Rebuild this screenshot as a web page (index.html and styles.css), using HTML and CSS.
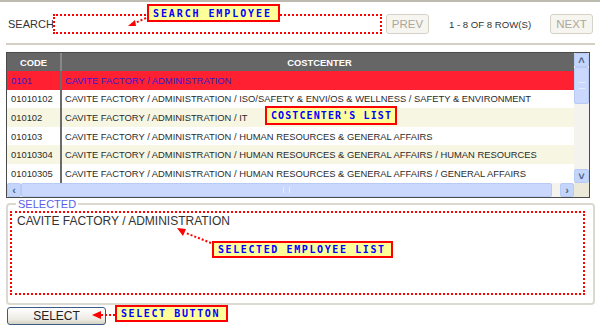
FILE: index.html
```html
<!DOCTYPE html>
<html>
<head>
	<title>Costcenter Picker</title>
	<link rel="stylesheet" href="styles.css">
</head>
<body>
	<div class="page">
		<div class="toolbar">
			<label class="search-label" for="search">SEARCH</label>
			<input id="search" class="search" type="text">
			<button class="pager-btn" disabled>PREV</button>
			<span class="pager-info">1 - 8 OF 8 ROW(S)</span>
			<button class="pager-btn" disabled>NEXT</button>
		</div>
		<div class="sep"></div>

		<div class="grid">
			<div class="grid-body">
				<div class="row head">
					<div class="c-code">CODE</div>
					<div class="c-name">COSTCENTER</div>
				</div>
				<div class="row picked">
					<div class="c-code">0101</div>
					<div class="c-name">CAVITE FACTORY / ADMINISTRATION</div>
				</div>
				<div class="row">
					<div class="c-code">01010102</div>
					<div class="c-name">CAVITE FACTORY / ADMINISTRATION / ISO/SAFETY &amp; ENVI/OS &amp; WELLNESS / SAFETY &amp; ENVIRONMENT</div>
				</div>
				<div class="row alt">
					<div class="c-code">010102</div>
					<div class="c-name">CAVITE FACTORY / ADMINISTRATION / IT</div>
				</div>
				<div class="row">
					<div class="c-code">010103</div>
					<div class="c-name">CAVITE FACTORY / ADMINISTRATION / HUMAN RESOURCES &amp; GENERAL AFFAIRS</div>
				</div>
				<div class="row alt">
					<div class="c-code">01010304</div>
					<div class="c-name">CAVITE FACTORY / ADMINISTRATION / HUMAN RESOURCES &amp; GENERAL AFFAIRS / HUMAN RESOURCES</div>
				</div>
				<div class="row">
					<div class="c-code">01010305</div>
					<div class="c-name">CAVITE FACTORY / ADMINISTRATION / HUMAN RESOURCES &amp; GENERAL AFFAIRS / GENERAL AFFAIRS</div>
				</div>
			</div>
			<div class="vscroll">
				<div class="sb-btn">&#x2C4;</div>
				<div class="sb-thumb v"><span class="grip"></span></div>
				<div class="sb-track"></div>
				<div class="sb-btn">&#x2C5;</div>
			</div>
			<div class="hscroll">
				<div class="sb-btn">&lsaquo;</div>
				<div class="sb-thumb h"><span class="grip"></span></div>
				<div class="sb-track"></div>
				<div class="sb-btn">&rsaquo;</div>
			</div>
			<div class="corner"></div>
		</div>

		<fieldset class="selected">
			<legend>SELECTED</legend>
			<div class="selbox">CAVITE FACTORY / ADMINISTRATION</div>
		</fieldset>

		<button class="select-btn">SELECT</button>

		<!-- callouts -->
		<div class="note n-search">SEARCH EMPLOYEE</div>
		<div class="note n-list">COSTCENTER'S LIST</div>
		<div class="note n-selected">SELECTED EMPLOYEE LIST</div>
		<div class="note n-button">SELECT BUTTON</div>

		<svg class="arrow a-search" width="20" height="12" viewBox="0 0 20 12">
			<line x1="18" y1="2" x2="7" y2="7" stroke="#f00" stroke-width="2" stroke-dasharray="2 2"/>
			<polygon points="0,10 7,4 8,10" fill="#f00"/>
		</svg>
		<svg class="arrow a-selected" width="36" height="18" viewBox="0 0 36 18">
			<line x1="34" y1="16" x2="9" y2="6" stroke="#f00" stroke-width="2" stroke-dasharray="2 2"/>
			<polygon points="0,1 9,2 6,9" fill="#f00"/>
		</svg>
		<svg class="arrow a-button" width="24" height="10" viewBox="0 0 24 10">
			<line x1="23" y1="5" x2="9" y2="5" stroke="#f00" stroke-width="2" stroke-dasharray="2 2"/>
			<polygon points="0,5 9,1 9,9" fill="#f00"/>
		</svg>
	</div>
</body>
</html>
```
FILE: styles.css
```css
html, body {
	margin: 0px;
	padding: 0px;
	background: #fff;
}
* {
	box-sizing: border-box;
}
body {
	font-family: "Liberation Sans", Arial, sans-serif;
	font-size: 11px;
	color: #333;
}
.page {
	position: relative;
	width: 600px;
	height: 331px;
	border-top: 2px solid #bdbab0;
	overflow: hidden;
}
.toolbar {
	display: flex;
	align-items: center;
	height: 41px;
	padding: 3px 0 0 8px;
}
.search-label {
	width: 45px;
	font-size: 11px;
}
.search {
	width: 329px;
	height: 20px;
	border: 2px dotted #f00;
	background: #fff;
	outline: none;
}
.pager-btn {
	width: 43px;
	height: 20px;
	margin-left: 4px;
	padding: 0;
	border: 1px solid #d5d3c8;
	border-radius: 3px;
	background: #f6f5f0;
	color: #aca899;
	font-family: inherit;
	font-size: 11.5px;
}
.pager-info {
	width: 117px;
	padding-left: 20px;
	color: #333;
	font-size: 9.6px;
}
.sep {
	height: 2px;
	margin: 0 5px 0 6px;
	background: #d4d0c4;
}

.grid {
	display: grid;
	grid-template-columns: 1fr 15px;
	grid-template-rows: 130px 14px;
	width: 584px;
	height: 146px;
	margin: 7px 0 0 6px;
	border: 1px solid #4a4a4a;
	background: #fff;
	font-size: 9.4px;
	color: #2b2b2b;
}
.grid-body {
	overflow: hidden;
}
.row {
	display: flex;
	height: 18.6px;
	align-items: center;
	white-space: nowrap;
}
.row .c-code {
	flex: 0 0 55px;
	padding-left: 4px;
	align-self: stretch;
	display: flex;
	align-items: center;
	border-right: 2px solid #6b6b6b;
}
.row .c-name {
	padding-left: 3px;
}
.row.head {
	height: 18px;
	background: #666;
	color: #fff;
	font-weight: bold;
	font-size: 9.4px;
}
.row.head .c-code {
	justify-content: center;
	padding-left: 0;
	border-right: 2px solid #888;
}
.row.head .c-name {
	flex: 1;
	text-align: center;
}
.row.picked {
	background: #ff2032;
	color: #2a1fd0;
}
.row.alt {
	background: #f6f6e3;
}

.vscroll, .hscroll {
	display: flex;
	background: #f4f3ee;
}
.vscroll {
	flex-direction: column;
}
.sb-btn {
	flex: 0 0 14px;
	height: 14px;
	width: 14px;
	border: 1px solid #b8cbf4;
	border-radius: 2px;
	background: #c4d5fb;
	color: #4d6185;
	font-size: 11px;
	font-weight: bold;
	line-height: 12px;
	text-align: center;
}
.vscroll .sb-btn {
	width: 15px;
}
.sb-thumb {
	display: flex;
	align-items: center;
	justify-content: center;
	border: 1px solid #b8cbf4;
	border-radius: 2px;
	background: #c9d8fc;
}
.sb-thumb.v {
	height: 37px;
}
.sb-thumb.h {
	width: 531px;
}
.sb-thumb.v .grip {
	width: 6px;
	height: 7px;
	border-top: 1px solid #e6eefd;
	border-bottom: 1px solid #e6eefd;
}
.sb-thumb.h .grip {
	width: 7px;
	height: 6px;
	border-left: 1px solid #e6eefd;
	border-right: 1px solid #e6eefd;
}
.sb-track {
	flex: 1;
}
.corner {
	background: #ece9d8;
}

.selected {
	width: 589px;
	height: 105px;
	margin: 2px 0 0 6px;
	padding: 0 8px 9px 2px;
	border: 2px solid #dcdad0;
	border-radius: 4px;
}
.selected legend {
	margin-left: 6px;
	padding: 0 2px;
	color: #5b5ee6;
	font-size: 11px;
	line-height: 8px;
}
.selbox {
	height: 84px;
	margin-top: 3px;
	padding: 1px 5px;
	border: 2px dotted #f00;
	font-size: 12px;
	color: #333;
}
.select-btn {
	display: block;
	width: 99px;
	height: 18px;
	margin: 2px 0 0 7px;
	padding: 0;
	border: 1px solid #3c5a86;
	border-radius: 3px;
	background: linear-gradient(#fff, #ecebe4 70%, #d6d2c2);
	color: #222;
	font-family: inherit;
	font-size: 12px;
}

.note {
	position: absolute;
	display: flex;
	align-items: center;
	padding: 0 0 0 4px;
	border: 2px solid #f00;
	background: #ffff99;
	color: #0000ff;
	font-family: "DejaVu Sans Mono", monospace;
	font-size: 10px;
	font-weight: bold;
	letter-spacing: 1.6px;
	white-space: nowrap;
}
.n-search {
	left: 147px;
	top: 2px;
	width: 133px;
	height: 18px;
	letter-spacing: 1.9px;
}
.n-list {
	left: 265px;
	top: 104px;
	width: 132px;
	height: 19px;
	letter-spacing: 1.1px;
}
.n-selected {
	left: 212px;
	top: 239px;
	width: 181px;
	height: 17px;
}
.n-button {
	left: 115px;
	top: 303px;
	width: 113px;
	height: 17px;
}
.arrow {
	position: absolute;
}
.a-search {
	left: 128px;
	top: 14px;
}
.a-selected {
	left: 177px;
	top: 225px;
}
.a-button {
	left: 92px;
	top: 308px;
}
```
